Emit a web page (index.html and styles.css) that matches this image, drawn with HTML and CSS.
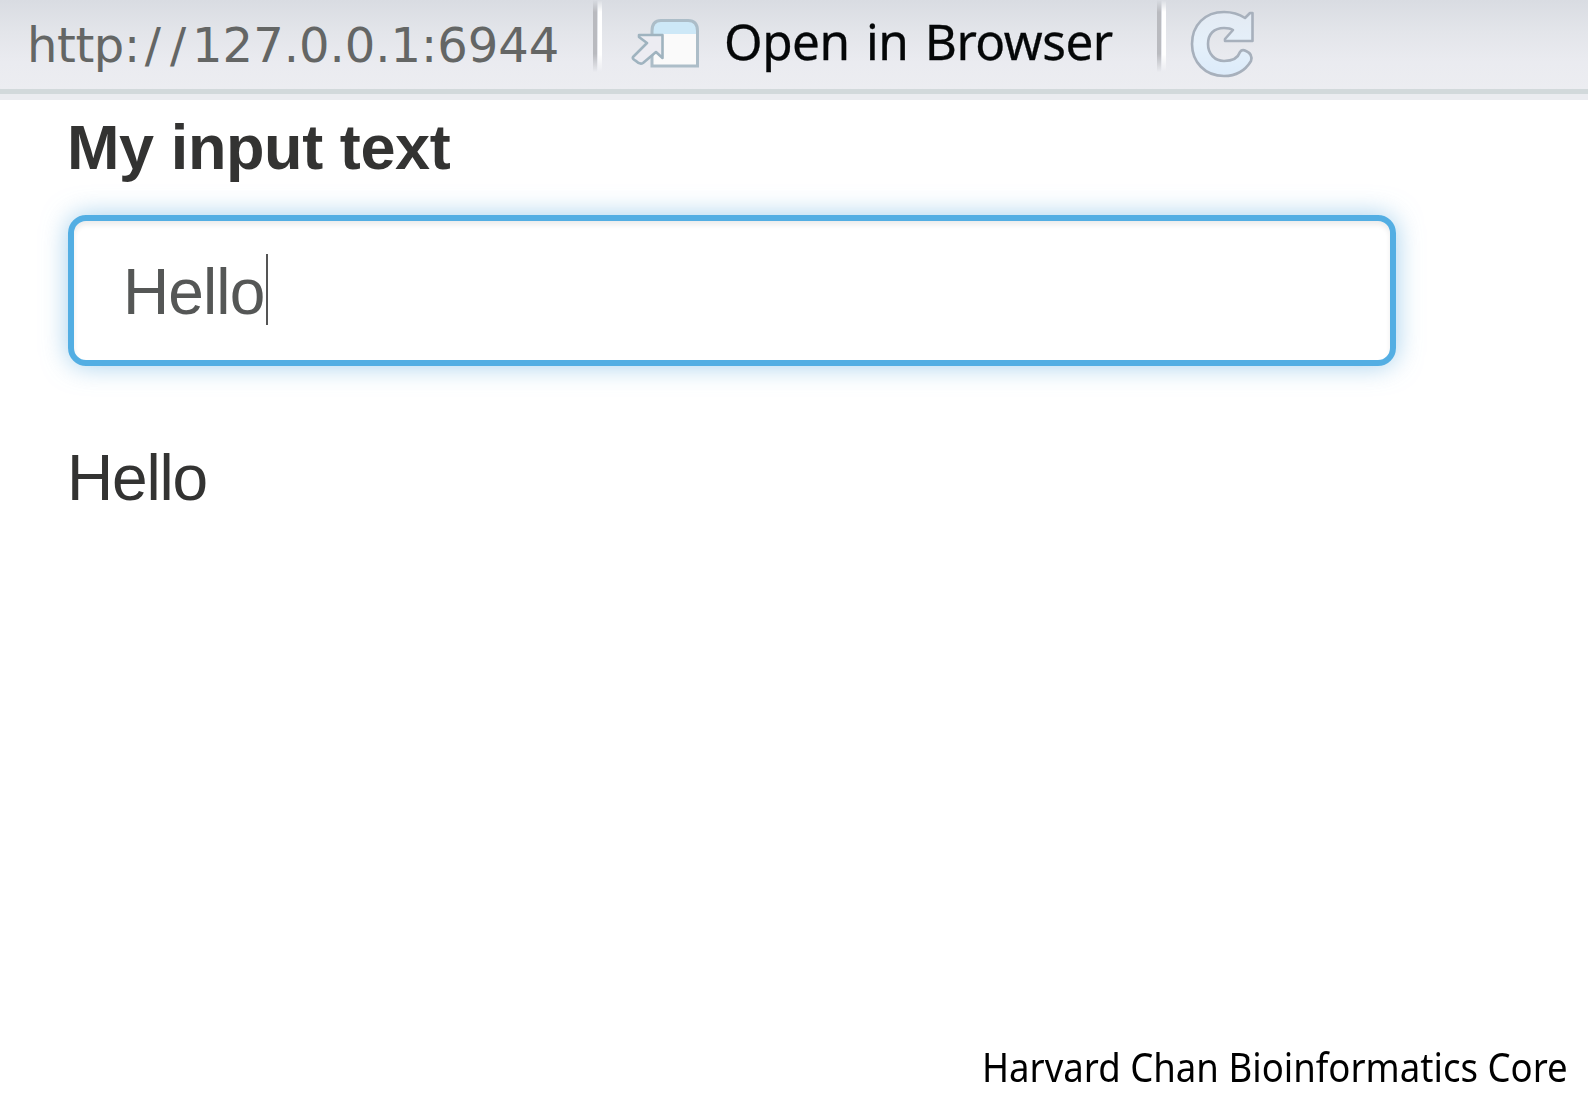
FILE: index.html
```html
<!DOCTYPE html>
<html lang="en">
<head>
<meta charset="utf-8">
<title>My input text</title>
<link rel="stylesheet" href="styles.css">
</head>
<body>
<header class="toolbar">
  <span class="url"><span class="scheme">http:</span><span class="slashes">//</span>127.0.0.1:6944</span>
  <i class="separator"></i>
  <svg class="open-icon" width="70" height="54" viewBox="0 0 70 54">
    <path d="M21 49V14Q21 4 30 4H57Q66 4 66 14V49Z" fill="#fafafa"/>
    <path d="M21 17V14Q21 4 30 4H57Q66 4 66 14V17Z" fill="#cde8f7"/>
    <path d="M21 49V14Q21 3.500 30 3.500H57Q66.500 3.500 66.500 14V49Z" fill="none" stroke="#acbdc8" stroke-width="3"/>
    <path d="M8 18H31.500V41L25 35L12 46Q9 48 5 44Q1 42 2 40L16 26L8 20Z" fill="#ececf2" stroke="#9fb3bf" stroke-width="2.600" stroke-linejoin="round"/>
  </svg>
  <span class="open-label">Open in Browser</span>
  <i class="separator"></i>
  <svg class="reload-icon" width="66" height="70" viewBox="0 0 66 70">
    <defs><linearGradient id="reload-fill" x1="0" y1="0" x2="0" y2="1"><stop offset="0" stop-color="#e3eaf3"/><stop offset=".5" stop-color="#e5f0fa"/><stop offset="1" stop-color="#dcebfa"/></linearGradient></defs>
    <path d="M62.500 5V33H35V31L43 22C40 20 37 20 34 20C24 20 18 26 18 36C18 46 25 53 34 53C42 53 48 50 50 44Q52 41 56 43Q63 46 61 53C55 63 46 68 34 68C15 68 2 54 2 36C2 17 15 4 34 4C42 4 49 6 55 10L60 5Z" fill="url(#reload-fill)" stroke="#a7b0bc" stroke-width="2.600" stroke-linejoin="round"/>
  </svg>
</header>
<main class="page">
  <div class="label">My input text</div>
  <div class="field"><span>Hello</span><i class="caret"></i></div>
  <div class="output">Hello</div>
</main>
<footer class="credit"><span class="credit-text">Harvard Chan Bioinformatics Core</span></footer>
</body>
</html>
```
FILE: styles.css
```css
* { box-sizing: border-box; }
body {
  margin: 0;
  height: 1095px;
  display: flex;
  flex-direction: column;
  overflow: hidden;
  background: #fff;
  font-family: "Liberation Sans", Arial, sans-serif;
}
.toolbar {
  height: 100px;
  flex: none;
  display: flex;
  align-items: flex-start;
  padding-left: 27px;
  background: linear-gradient(#d9dce2 0, #e3e5ea 32px, #eaebf0 62px, #ecedf1 89px, #d2d9db 89px, #d2d9db 94px, #ebecf0 94px);
  font-family: "Noto Sans", sans-serif;
  font-size: 49.5px;
  line-height: 68px;
  white-space: pre;
}
.url { width: 566px; padding-top: 11px; color: #646665; font-family: "DejaVu Sans", sans-serif; font-size: 48px; }
.scheme { letter-spacing: -.4px; }
.slashes { padding-left: 5px; letter-spacing: 9px; margin-right: -3px; }
.separator {
  width: 10px;
  height: 72px;
  flex: none;
  background: linear-gradient(90deg, #b9babf 4px, transparent 4px 5px, #fff 5px 9px, transparent 9px);
  -webkit-mask-image: linear-gradient(transparent, #000 12px 54px, transparent);
  mask-image: linear-gradient(transparent, #000 12px 54px, transparent);
}
.open-icon { margin: 17px 0 0 28px; flex: none; }
.open-label { width: 433px; margin-left: 23px; padding-top: 7px; color: #050708; letter-spacing: -.5px; word-spacing: 4px; -webkit-text-stroke: .3px #050708; }
.reload-icon { margin: 8px 0 0 23px; flex: none; }
.page { flex: 1; padding: 11px 0 0 67px; }
.label { height: 104px; line-height: 72px; font-size: 63px; font-weight: 700; letter-spacing: -.4px; color: #333332; }
.field {
  width: 1328px;
  height: 151px;
  display: flex;
  align-items: center;
  margin-left: 1px;
  padding-left: 49px;
  border: 6px solid #53aee3;
  border-radius: 18px;
  box-shadow: inset 0 4px 5px rgba(0, 0, 0, .075), 0 0 26px rgba(102, 175, 223, .6);
  color: #555756;
  font-size: 64px;
  letter-spacing: -.9px;
}
.field span { padding-top: 2px; }
.caret { width: 2px; height: 71px; margin: -2px 0 0 2px; background: #555; }
.output { margin-top: 76px; line-height: 72px; font-size: 64px; letter-spacing: -1.2px; color: #333332; }
.credit { height: 58px; padding-left: 982px; font-family: "Noto Sans", sans-serif; font-size: 40px; line-height: 60px; color: #000; white-space: pre; }
.credit-text { display: inline-block; transform: scaleX(.914); transform-origin: left; }
```
